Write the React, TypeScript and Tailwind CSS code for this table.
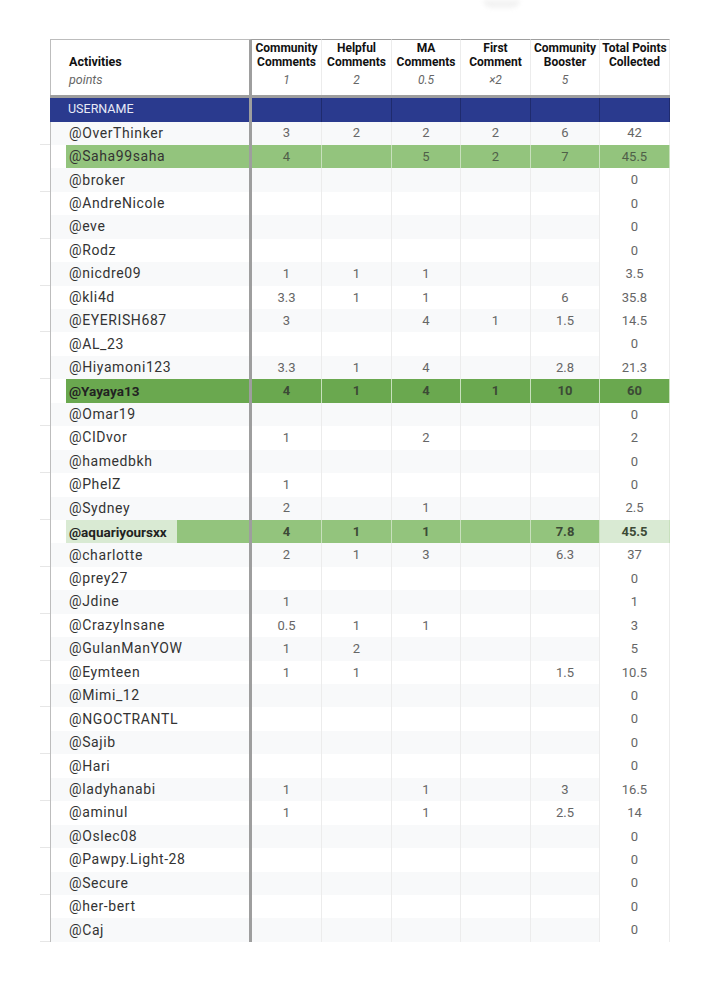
import clsx from 'clsx'

type Tone = 'light' | 'dark' | 'mixed' | undefined

type Row = {
  name: string
  vals: string[]
  tone?: Tone
}

const blank = (total: string) => ['', '', '', '', '', total]

const rows: Row[] = [
  { name: '@OverThinker', vals: ['3', '2', '2', '2', '6', '42'] },
  { name: '@Saha99saha', vals: ['4', '', '5', '2', '7', '45.5'], tone: 'light' },
  { name: '@broker', vals: blank('0') },
  { name: '@AndreNicole', vals: blank('0') },
  { name: '@eve', vals: blank('0') },
  { name: '@Rodz', vals: blank('0') },
  { name: '@nicdre09', vals: ['1', '1', '1', '', '', '3.5'] },
  { name: '@kli4d', vals: ['3.3', '1', '1', '', '6', '35.8'] },
  { name: '@EYERISH687', vals: ['3', '', '4', '1', '1.5', '14.5'] },
  { name: '@AL_23', vals: blank('0') },
  { name: '@Hiyamoni123', vals: ['3.3', '1', '4', '', '2.8', '21.3'] },
  { name: '@Yayaya13', vals: ['4', '1', '4', '1', '10', '60'], tone: 'dark' },
  { name: '@Omar19', vals: blank('0') },
  { name: '@CIDvor', vals: ['1', '', '2', '', '', '2'] },
  { name: '@hamedbkh', vals: blank('0') },
  { name: '@PhelZ', vals: ['1', '', '', '', '', '0'] },
  { name: '@Sydney', vals: ['2', '', '1', '', '', '2.5'] },
  { name: '@aquariyoursxx', vals: ['4', '1', '1', '', '7.8', '45.5'], tone: 'mixed' },
  { name: '@charlotte', vals: ['2', '1', '3', '', '6.3', '37'] },
  { name: '@prey27', vals: blank('0') },
  { name: '@Jdine', vals: ['1', '', '', '', '', '1'] },
  { name: '@CrazyInsane', vals: ['0.5', '1', '1', '', '', '3'] },
  { name: '@GulanManYOW', vals: ['1', '2', '', '', '', '5'] },
  { name: '@Eymteen', vals: ['1', '1', '', '', '1.5', '10.5'] },
  { name: '@Mimi_12', vals: blank('0') },
  { name: '@NGOCTRANTL', vals: blank('0') },
  { name: '@Sajib', vals: blank('0') },
  { name: '@Hari', vals: blank('0') },
  { name: '@ladyhanabi', vals: ['1', '', '1', '', '3', '16.5'] },
  { name: '@aminul', vals: ['1', '', '1', '', '2.5', '14'] },
  { name: '@Oslec08', vals: blank('0') },
  { name: '@Pawpy.Light-28', vals: blank('0') },
  { name: '@Secure', vals: blank('0') },
  { name: '@her-bert', vals: blank('0') },
  { name: '@Caj', vals: blank('0') },
]

const columns = [
  { top: 'Community', bottom: 'Comments', pts: '1' },
  { top: 'Helpful', bottom: 'Comments', pts: '2' },
  { top: 'MA', bottom: 'Comments', pts: '0.5' },
  { top: 'First', bottom: 'Comment', pts: '×2' },
  { top: 'Community', bottom: 'Booster', pts: '5' },
  { top: 'Total Points', bottom: 'Collected', pts: '' },
]

const grid = 'grid grid-cols-[10px_202px_70px_70px_69px_70px_69px_70px]'

const toneBg = (tone: Tone, col: number) => {
  if (tone === 'light') return 'bg-[#93c47d]'
  if (tone === 'dark') return 'bg-[#6aa84f]'
  if (tone === 'mixed') return col === 5 ? 'bg-[#d9ead3]' : 'bg-[#93c47d]'
  return ''
}

const DataRow = ({ row, index }: { row: Row; index: number }) => {
  const striped = index % 2 === 0
  const stripe = striped ? 'bg-[#f8f9fa]' : 'bg-white'
  const bold = row.tone === 'dark' || row.tone === 'mixed'

  return (
    <div className={clsx(grid, 'h-[23.44px]')}>
      <div className={clsx(striped && 'border-b border-[#e6e6e6]')} />
      <div className={clsx('flex h-full border-l border-[#bdbdbd] border-r-[3px] border-r-[#9e9e9e]', stripe)}>
        <div className="w-[15px] shrink-0" />
        {row.tone === 'mixed' ? (
          <div className="flex flex-1 bg-[#93c47d]">
            <div className="flex w-[111px] items-center bg-[#d9ead3] pl-[3px] text-[13.5px] font-bold text-[#222]">
              {row.name}
            </div>
          </div>
        ) : (
          <div
            className={clsx(
              'flex flex-1 items-center pl-[3px]',
              toneBg(row.tone, 0),
              bold ? 'text-[13.5px] font-bold text-[#222]' : 'text-[14px] tracking-[0.6px] text-[#333]'
            )}
          >
            {row.name}
          </div>
        )}
      </div>
      {row.vals.map((v, i) => (
        <div
          key={i}
          className={clsx(
            'flex items-center justify-center text-[13px]',
            row.tone ? 'border-r border-[#c8e0bd]' : 'border-r border-[#ececec]',
            row.tone ? toneBg(row.tone, i) : i === 5 ? 'bg-white' : stripe,
            bold ? 'font-bold text-[#3c4a36]' : row.tone ? 'text-[#4f5f48]' : 'text-[#666]'
          )}
        >
          {v}
        </div>
      ))}
    </div>
  )
}

const App = () => {
  return (
    <div className="h-[1003px] w-[712px] overflow-hidden bg-white" style={{ fontFamily: 'Roboto, "Noto Sans", sans-serif' }}>
      <div className="ml-[483px] h-[8px] w-[37px] rounded-b-full bg-[#f3f3f3] blur-[2px]" />
      <div className="ml-[40px] mt-[31px]">
        {/* header */}
        <div className={clsx(grid, 'h-[56px]')}>
          <div />
          <div className="flex flex-col border-l border-t border-[#bdbdbd] border-r-[3px] border-r-[#9e9e9e] pl-[18px] pt-[15px] text-[12.5px]">
            <span className="leading-[14px] font-bold text-[#111]">Activities</span>
            <span className="mt-[4px] leading-[14px] italic text-[#666]">points</span>
          </div>
          {columns.map((c, i) => (
            <div
              key={i}
              className="flex flex-col items-center border-r border-t border-r-[#ececec] border-t-[#9e9e9e] pt-[1px] text-[12px]"
            >
              <span className="leading-[14px] font-bold text-[#111]">{c.top}</span>
              <span className="leading-[14px] font-bold text-[#111]">{c.bottom}</span>
              <span className="mt-[4px] leading-[14px] italic text-[#666]">{c.pts}</span>
            </div>
          ))}
        </div>
        <div className="ml-[10px] h-[3px] w-[620px] bg-[#9e9e9e]" />
        {/* username bar */}
        <div className={clsx(grid, 'h-[23.5px]')}>
          <div />
          <div className="flex items-center border-r-[3px] border-r-[#9e9e9e] bg-[#2a3a8e] pl-[18px] text-[12.5px] text-[#e8eaf6]">
            USERNAME
          </div>
          {columns.map((_, i) => (
            <div key={i} className="border-r border-[#1f2b6e] bg-[#2a3a8e]" />
          ))}
        </div>
        {rows.map((row, i) => (
          <DataRow key={row.name} row={row} index={i} />
        ))}
      </div>
    </div>
  )
}

export default App
